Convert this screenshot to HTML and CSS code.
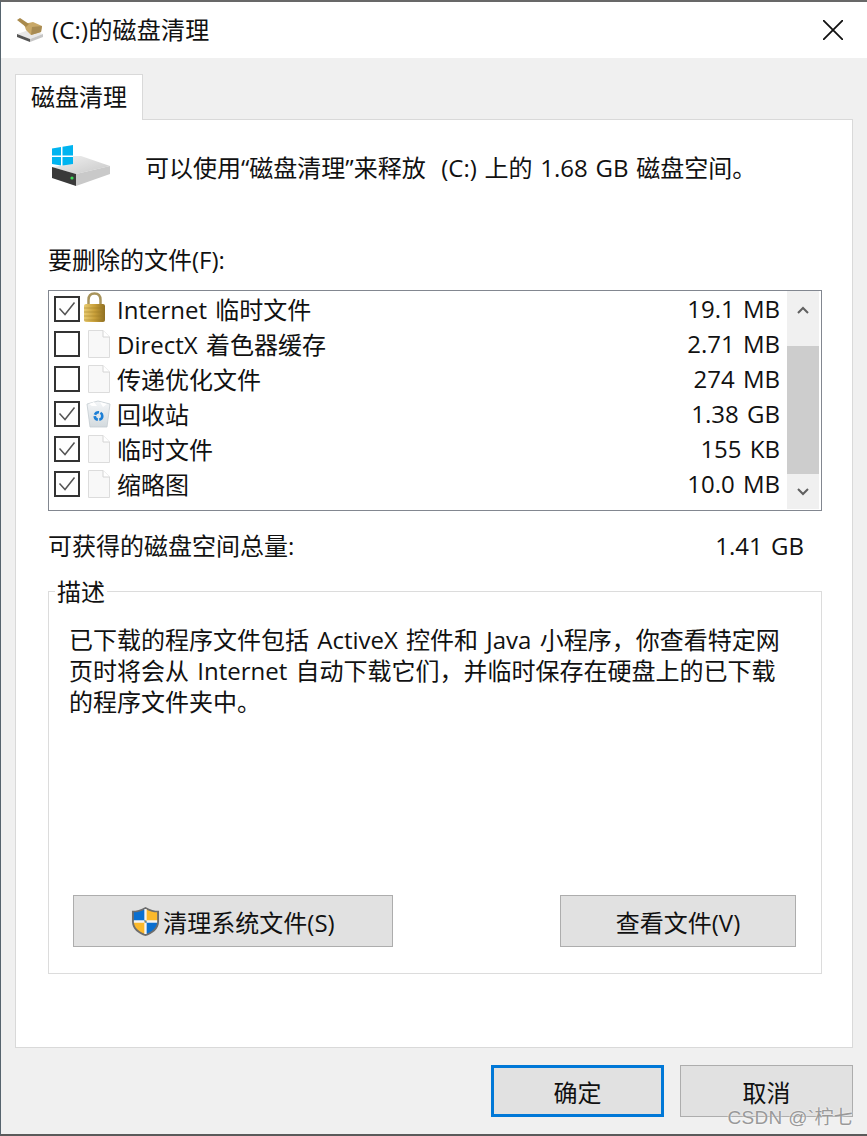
FILE: index.html
```html
<!DOCTYPE html>
<html lang="zh-CN">
<head>
    <meta charset="UTF-8">
    <title>(C:)的磁盘清理</title>
    <link rel="stylesheet" href="styles.css">
</head>
<body>
    <svg class="defs" width="0" height="0">
        <defs>
            <symbol id="doc" viewBox="0 0 22 28">
                <path d="M.5.5H15L21.5 7V27.5H.5Z" fill="#f8f8f8" stroke="#dcdcdc"/>
                <path d="M15 .5V7H21.5" fill="#fff" stroke="#d4d4d4"/>
            </symbol>
            <symbol id="tick" viewBox="0 0 22 22">
                <path d="M3.500 10.500L9 16.500L18.500 4.500" fill="none" stroke="#555" stroke-width="1.500"/>
            </symbol>
            <linearGradient id="gold" x1="0" x2="1" y1="0" y2="0">
                <stop offset="0" stop-color="#e8cb72"/>
                <stop offset=".5" stop-color="#c9a03a"/>
                <stop offset="1" stop-color="#8f6f22"/>
            </linearGradient>
            <linearGradient id="top-face" x1="0" x2="1" y1="0" y2="1">
                <stop offset="0" stop-color="#f2f2f2"/>
                <stop offset="1" stop-color="#c8c8c8"/>
            </linearGradient>
            <linearGradient id="bin" x1="0" x2="0" y1="0" y2="1">
                <stop offset="0" stop-color="#f4f6f8"/>
                <stop offset="1" stop-color="#d3dade"/>
            </linearGradient>
        </defs>
    </svg>
    <div class="window">
        <!-- 标题栏 -->
        <div class="titlebar">
            <svg class="title-icon" viewBox="0 0 28 24">
                <path d="M1 16L13 12L27 16L14 21Z" fill="#e8e8e8"/>
                <path d="M1 16L14 21V24L1 19Z" fill="#555"/>
                <path d="M14 21L27 16V19L14 24Z" fill="#c6c6c6"/>
                <path d="M8 6L17 4L26 8L25 14L15 17L10 12Z" fill="#c8a868"/>
                <path d="M1 2L4 0L13 6L10 9Z" fill="#a98a4c"/>
                <path d="M15 17L16 9L26 8L25 14Z" fill="#a88b52"/>
            </svg>
            <span class="title-text">(C:)的磁盘清理</span>
            <svg class="close-icon" viewBox="0 0 20 20">
                <path d="M0 0L20 20M20 0L0 20" stroke="#111" stroke-width="1.800" fill="none"/>
            </svg>
        </div>

        <div class="content">
            <div class="tab">磁盘清理</div>
            <div class="panel">
                <div class="intro">
                    <svg class="drive-icon" viewBox="0 0 60 44">
                        <path d="M1 5.500L10 4V12.500H1ZM11.500 3.800L22 2V12.500H11.500ZM1 14H10V22.500L1 21ZM11.500 14H22V24.500L11.500 22.700Z" fill="#00b4f0"/>
                        <path d="M1 24L22 21V13L30 13L59 23L25 31Z" fill="url(#top-face)"/>
                        <path d="M1 24L25 31V43L1 35Z" fill="#3a3a3a"/>
                        <path d="M25 31L59 23V31L25 43Z" fill="#c9c9c9"/>
                        <circle cx="21" cy="35" r="1.600" fill="#3ddc5a"/>
                    </svg>
                    <span>可以使用“磁盘清理”来释放&nbsp; (C:) 上的 1.68 GB 磁盘空间。</span>
                </div>

                <div class="list-label">要删除的文件(F):</div>
                <div class="file-list">
                    <div class="rows">
                        <div class="row">
                            <span class="check"><svg><use href="#tick"/></svg></span>
                            <svg class="row-icon lock" viewBox="0 0 22 31">
                                <path d="M4.500 13V8C4.500 3.500 7 1.500 10.500 1.500S16.500 3.500 16.500 8V13" fill="none" stroke="#a8945c" stroke-width="2.500"/>
                                <rect x="0" y="12" width="21" height="18" rx="2" fill="url(#gold)"/>
                                <path d="M0 16H21M0 20H21M0 24H21M0 28H21" stroke="#9c7b26" stroke-width=".8" opacity=".6"/>
                            </svg>
                            <span class="name">Internet 临时文件</span>
                            <span class="size">19.1 MB</span>
                        </div>
                        <div class="row">
                            <span class="check"></span>
                            <svg class="row-icon"><use href="#doc"/></svg>
                            <span class="name">DirectX 着色器缓存</span>
                            <span class="size">2.71 MB</span>
                        </div>
                        <div class="row">
                            <span class="check"></span>
                            <svg class="row-icon"><use href="#doc"/></svg>
                            <span class="name">传递优化文件</span>
                            <span class="size">274 MB</span>
                        </div>
                        <div class="row">
                            <span class="check"><svg><use href="#tick"/></svg></span>
                            <svg class="row-icon bin" viewBox="0 0 25 28">
                                <path d="M1 4L12 1L24 4L21 27H4Z" fill="url(#bin)" stroke="#c4ccd1" stroke-width=".8"/>
                                <path d="M3 4L8 2L11 6L6 6ZM14 2L21 4L17 7Z" fill="#fff"/>
                                <circle cx="12.500" cy="16" r="3.800" fill="none" stroke="#1c7fd6" stroke-width="2.600" stroke-dasharray="5 1.500"/>
                            </svg>
                            <span class="name">回收站</span>
                            <span class="size">1.38 GB</span>
                        </div>
                        <div class="row">
                            <span class="check"><svg><use href="#tick"/></svg></span>
                            <svg class="row-icon"><use href="#doc"/></svg>
                            <span class="name">临时文件</span>
                            <span class="size">155 KB</span>
                        </div>
                        <div class="row">
                            <span class="check"><svg><use href="#tick"/></svg></span>
                            <svg class="row-icon"><use href="#doc"/></svg>
                            <span class="name">缩略图</span>
                            <span class="size">10.0 MB</span>
                        </div>
                    </div>
                    <div class="scrollbar">
                        <div class="arrow-btn">
                            <svg viewBox="0 0 12 8"><path d="M1 7L6 2L11 7" fill="none" stroke="#606060" stroke-width="2"/></svg>
                        </div>
                        <div class="thumb"></div>
                        <div class="arrow-btn">
                            <svg viewBox="0 0 12 8"><path d="M1 1L6 6L11 1" fill="none" stroke="#606060" stroke-width="2"/></svg>
                        </div>
                    </div>
                </div>

                <div class="total">
                    <span>可获得的磁盘空间总量:</span>
                    <span>1.41 GB</span>
                </div>

                <fieldset class="desc">
                    <legend>描述</legend>
                    <p>已下载的程序文件包括 ActiveX 控件和 Java 小程序，你查看特定网<br>页时将会从 Internet 自动下载它们，并临时保存在硬盘上的已下载<br>的程序文件夹中。</p>
                    <div class="desc-actions">
                        <button class="btn btn-clean">
                            <svg class="shield" viewBox="0 0 30 32">
                                <path d="M15 1C20 4 24 5 29 5V16C29 24 22 29 15 31C8 29 1 24 1 16V5C6 5 10 4 15 1Z" fill="#6d6d6d"/>
                                <path d="M15 3V16H3V6.500C7 6.500 11 5.500 15 3Z" fill="#0a6fd0"/>
                                <path d="M15 3C19 5.500 23 6.500 27 6.500V16H15Z" fill="#fbb92c"/>
                                <path d="M3 16H15V29C9 27 3 23 3 16Z" fill="#fbb92c"/>
                                <path d="M15 16H27C27 23 21 27 15 29Z" fill="#0a6fd0"/>
                                <path d="M13.800 3V29H16.200V3ZM3 14.800H27V17.200H3Z" fill="#f4f4f4"/>
                            </svg>
                            清理系统文件(S)
                        </button>
                        <button class="btn btn-view">查看文件(V)</button>
                    </div>
                </fieldset>
            </div>

            <div class="footer">
                <button class="btn btn-foot btn-default">确定</button>
                <button class="btn btn-foot">取消</button>
            </div>
        </div>
    </div>
    <div class="watermark">CSDN @`柠七</div>
</body>
</html>
```

FILE: styles.css
```css
html, body {
    margin: 0;
    padding: 0;
    height: 100%;
    overflow: hidden;
}

body {
    font-family: "Open Sans", "Noto Sans CJK SC", sans-serif;
    font-size: 24px;
    word-spacing: 2px;
    color: #111;
    position: relative;
}

.defs {
    position: absolute;
}

.window {
    box-sizing: border-box;
    height: 1136px;
    display: flex;
    flex-direction: column;
    border-top: 2px solid #686868;
    border-bottom: 2px solid #5a5a5a;
    border-left: 1px solid #56646e;
    background: #f0f0f0;
}

/* 标题栏 */
.titlebar {
    flex: none;
    height: 56px;
    background: #fff;
    display: flex;
    align-items: center;
    padding: 0 24px 0 15px;
}

.title-icon {
    width: 28px;
    height: 24px;
    margin-right: 8px;
}

.title-text {
    flex: 1;
    line-height: 56px;
    letter-spacing: 0.2px;
}

.close-icon {
    width: 20px;
    height: 20px;
}

.content {
    flex: 1;
    display: flex;
    flex-direction: column;
    padding: 16px 14px 0 14px;
}

.tab {
    align-self: flex-start;
    box-sizing: border-box;
    width: 128px;
    height: 46px;
    line-height: 44px;
    text-align: center;
    background: #fff;
    border: 1px solid #d9d9d9;
    border-bottom: 0;
    margin-bottom: -1px;
    position: relative;
    z-index: 1;
}

.panel {
    box-sizing: border-box;
    height: 929px;
    background: #fff;
    border: 1px solid #d9d9d9;
    padding: 0 30px 0 32px;
}

.intro {
    height: 92px;
    display: flex;
    align-items: center;
    padding-left: 3px;
    word-spacing: 1.5px;
}

.drive-icon {
    width: 60px;
    height: 44px;
    margin: -2px 34px 0 0;
}

.list-label {
    margin-top: 24px;
    height: 54px;
    line-height: 48px;
}

/* 文件列表 */
.file-list {
    box-sizing: border-box;
    height: 221px;
    display: flex;
    border: 1px solid #828790;
    padding: 0 2px 1px 0;
}

.rows {
    flex: 1;
    padding-right: 7px;
}

.row {
    height: 35px;
    display: flex;
    align-items: center;
    padding-left: 5px;
}

.check {
    box-sizing: border-box;
    width: 26px;
    height: 26px;
    border: 2px solid #333;
    flex: none;
}

.check svg {
    display: block;
    width: 22px;
    height: 22px;
}

.row-icon {
    width: 22px;
    height: 28px;
    margin: 0 7px 0 8px;
    flex: none;
}

.row-icon.lock {
    width: 22px;
    height: 31px;
    margin: -3px 11px 0 4px;
}

.row-icon.bin {
    width: 25px;
    margin: 0 6px;
}

.name {
    flex: 1;
    white-space: nowrap;
}

.size {
    white-space: nowrap;
}

.scrollbar {
    width: 32px;
    display: flex;
    flex-direction: column;
    background: #f0f0f0;
}

.arrow-btn {
    height: 35px;
    display: flex;
    align-items: center;
    justify-content: center;
}

.arrow-btn:first-child {
    height: 38px;
    margin-bottom: 17px;
}

.arrow-btn svg {
    width: 12px;
    height: 8px;
}

.thumb {
    height: 128px;
    background: #cdcdcd;
}

.total {
    display: flex;
    justify-content: space-between;
    height: 50px;
    line-height: 70px;
    padding-right: 18px;
}

/* 描述 */
.desc {
    box-sizing: border-box;
    height: 400px;
    margin: 13px 0 0;
    padding: 0 21px 0 20px;
    border: 1px solid #dcdcdc;
    display: flex;
    flex-direction: column;
}

.desc legend {
    padding: 0 2px;
    margin-left: -14px;
    line-height: 36px;
    height: 34px;
}

.desc p {
    margin: 16px 0 0;
    line-height: 31px;
    white-space: nowrap;
}

.desc-actions {
    display: flex;
    justify-content: space-between;
    margin-top: 178px;
    padding: 0 4px;
}

.btn {
    box-sizing: border-box;
    height: 52px;
    background: #e1e1e1;
    border: 1px solid #adadad;
    font: inherit;
    color: #111;
    padding: 0;
    display: flex;
    align-items: center;
    justify-content: center;
}

.btn-clean {
    width: 320px;
}

.btn-view {
    width: 236px;
}

.shield {
    width: 29px;
    height: 31px;
    margin-right: 3px;
}

.footer {
    display: flex;
    justify-content: flex-end;
    gap: 16px;
    margin-top: 17px;
}

.btn-foot {
    width: 173px;
}

.btn-default {
    border: 3px solid #0078d7;
}

.watermark {
    position: absolute;
    right: 14px;
    bottom: 9px;
    font-family: "Liberation Sans", "Noto Sans CJK SC", sans-serif;
    font-size: 19px;
    line-height: 19px;
    word-spacing: 0;
    color: #999;
    letter-spacing: 0.3px;
    text-shadow: 0 0 2px #fff;
}
```
